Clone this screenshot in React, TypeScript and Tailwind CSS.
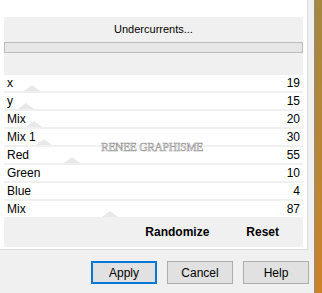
const rows = [
  { label: 'x', value: 19, thumb: 20 },
  { label: 'y', value: 15, thumb: 14 },
  { label: 'Mix', value: 20, thumb: 22 },
  { label: 'Mix 1', value: 30, thumb: 32 },
  { label: 'Red', value: 55, thumb: 60 },
  { label: 'Green', value: 10, thumb: -20 },
  { label: 'Blue', value: 4, thumb: -20 },
  { label: 'Mix', value: 87, thumb: 98 },
]

export default function App() {
  return (
    <div className="flex w-[322px] h-[293px] bg-[#f0f0f0] font-['Liberation_Sans',sans-serif] text-[12px] text-black overflow-hidden">
      <div className="flex flex-col w-[314px]">
        {/* Settings area */}
        <div className="h-[250px] w-[308px] bg-white border-r border-b border-[#dcdcdc] pt-[17px] px-[4px]">
          <div className="h-[56px] bg-[#f0f0f0] flex flex-col">
            <div className="h-[25px] flex items-center justify-center leading-none text-[11px]">Undercurrents...</div>
            <div className="h-[11px] bg-[#e6e6e6] border border-[#bcbcbc]" />
          </div>

          <div className="relative">
            {rows.map((row, i) => (
              <div key={i} className="relative h-[18px] border-t-2 border-[#f0f0f0] flex items-center justify-between px-[3px] leading-none">
                <div
                  className="absolute bottom-0 w-0 h-0 border-l-[8px] border-r-[8px] border-b-[6px] border-l-transparent border-r-transparent border-b-[#e8e8e8]"
                  style={{ left: row.thumb }}
                />
                <span className="relative">{row.label}</span>
                <span className="relative">{row.value}</span>
              </div>
            ))}
            <div className="absolute left-[97px] top-[66px] font-['Liberation_Serif',serif] text-[11.5px] text-white tracking-tight [-webkit-text-stroke:0.6px_#9a9a9a]">
              RENEE GRAPHISME
            </div>
          </div>

          <div className="h-[30px] bg-[#f0f0f0] flex items-center justify-end gap-[37px] pr-[24px] font-bold">
            <span>Randomize</span>
            <span>Reset</span>
          </div>
        </div>

        {/* Dialog buttons */}
        <div className="flex-1 flex items-start justify-end gap-[10px] pt-[11px] pr-[5px]">
          <button className="w-[66px] h-[23px] bg-[#e1e1e1] border-2 border-[#0078d7]">Apply</button>
          <button className="w-[66px] h-[23px] bg-[#e1e1e1] border border-[#adadad]">Cancel</button>
          <button className="w-[66px] h-[23px] bg-[#e1e1e1] border border-[#adadad]">Help</button>
        </div>
      </div>
      <div className="w-[8px] border-l border-[#8c8c8c] bg-gradient-to-b from-[#a4883e] to-[#cc8228]" />
    </div>
  )
}
